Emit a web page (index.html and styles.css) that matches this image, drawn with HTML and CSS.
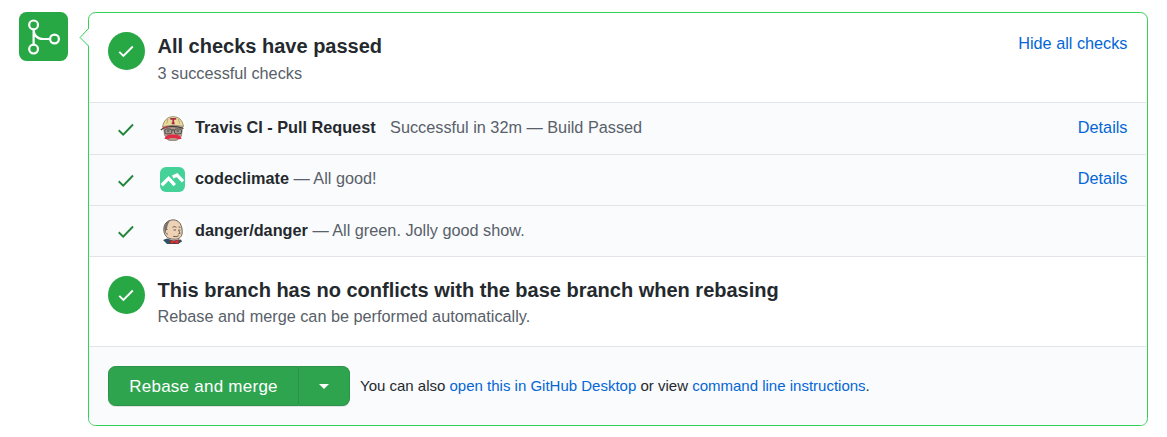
FILE: index.html
```html
<!DOCTYPE html>
<html lang="en">
<head>
<meta charset="utf-8">
<title>Merge pull request</title>
<link rel="stylesheet" href="styles.css">
</head>
<body>
<main class="timeline">
  <div class="merge-badge">
    <svg width="49" height="49" viewBox="0 0 49 49" fill="none" stroke="#fff" stroke-width="2.2"><circle cx="14.6" cy="12.9" r="4.4"/><circle cx="14.6" cy="37.1" r="4.4"/><circle cx="35.5" cy="27" r="4.4"/><path d="M14.6 17.2v15.6M14.6 17.4c0 5.8 3.8 9.6 9.4 9.6h7"/></svg>
  </div>
  <section class="box">
    <svg class="pointer" width="10" height="20" viewBox="0 0 10 20"><path d="M10 0L1 9.5 10 18.5" fill="#f6f8fa" stroke="#34d058" stroke-width="1"/></svg>
    <div class="panel">
      <div class="status checks">
        <span class="circle"><svg width="37" height="38" viewBox="0 0 37 38"><path d="M11.3 19.8l4.1 4.1 9.4-9.4"/></svg></span>
        <div class="copy"><h2>All checks have passed</h2><p>3 successful checks</p></div>
        <a class="toggle">Hide all checks</a>
      </div>
      <div class="row first">
        <svg class="tick" width="18" height="16" viewBox="0 0 18 16"><path d="M1.7 8.3l4.5 4.4L16 2.5"/></svg>
        <svg class="avatar" width="25" height="25" viewBox="0 0 25 25">
          <rect width="25" height="25" rx="7" fill="#fff"/>
          <path d="M3.5 11h19l-1 9-4 4-4.5 1-5-1-3.5-5z" fill="#b59a87" stroke="#7b7168" stroke-width=".7"/>
          <path d="M2.5 11C3.5 5 7 .7 13 .7S22.5 4 23.5 10.5C17 8.8 9 9 2.5 11z" fill="#ead99b" stroke="#847b5c" stroke-width=".8"/>
          <path d="M6.8 7.5l1-4.5M19.5 7.5L18.5 3" stroke="#b5a975"/>
          <path d="M10.2 2.9h6M13.2 3v4.500M11.7 7.3h3" stroke="#a92d44" stroke-width="1.7"/>
          <path d="M.8 14c5-4.3 15-4.8 22.7-1.5" fill="none" stroke="#45403f" stroke-width="1.3"/>
          <path d="M2.5 12.3l6-2" stroke="#c9374c" stroke-width="1.2"/>
          <rect x="4.8" y="13" width="7" height="4.8" rx="1.8" fill="#a79c91" stroke="#4a4c4b"/>
          <rect x="14.5" y="13" width="7" height="4.8" rx="1.8" fill="#a79c91" stroke="#4a4c4b"/>
          <path d="M7 15h2.5m7 0H19M12 14h2.5" stroke="#393f40" stroke-width="1"/>
          <path d="M4.5 22.8c.5-2.800 4-4.800 8.500-4.300 4.500-.5 8 1.500 8.700 4.300-2.500.7-4.700.3-6.200-.7h-5c-1.500 1-3.500 1.400-6 .7z" fill="#e22b45"/>
        </svg>
        <strong>Travis CI - Pull Request</strong><span class="result travis-result">Successful in 32m — Build Passed</span><a class="details">Details</a>
      </div>
      <div class="row">
        <svg class="tick" width="18" height="16" viewBox="0 0 18 16"><path d="M1.7 8.3l4.5 4.4L16 2.5"/></svg>
        <svg class="avatar" width="25" height="25" viewBox="0 0 25 25"><rect width="25" height="25" rx="6" fill="#45d298"/><path d="M1.7 18.2l6.9-6.8 6.2 6.7M12.7 10.1l4.3-2.1 6 6.3" fill="none" stroke="#fff" stroke-width="3.3"/></svg>
        <strong>codeclimate</strong><span class="result">— All good!</span><a class="details">Details</a>
      </div>
      <div class="row last">
        <svg class="tick" width="18" height="16" viewBox="0 0 18 16"><path d="M1.7 8.3l4.5 4.4L16 2.5"/></svg>
        <svg class="avatar" width="25" height="25" viewBox="0 0 25 25">
          <rect width="25" height="25" rx="7" fill="#fff"/>
          <path d="M3 21l4-1.5 6 2 8-1 1 2-4 2.5H7z" fill="#315063"/>
          <path d="M6 17C3 14 3 7 6 3.8S15-.3 18.5 2.7c3 2.3 4 7 3.7 12-1 4-4.2 6-8.2 5.5-4 0-6.5-1-8-3.2z" fill="#edd2b5" stroke="#4b443f" stroke-width=".8"/>
          <path d="M4 9C5 5 7 2 10.5 1.3 8.5 3.5 7.5 6 7 9.5L6.5 12 5 13z" fill="#77736c"/>
          <path d="M7.5 10.5c-3.5-1-2.5 5 .5 4.5" fill="#edd2b5" stroke="#4b443f" stroke-width=".8"/>
          <path d="M12.5 8.3q2-1.5 4 0M18.5 8l2 .2M13.5 11h2.5m2.5 0h2m-2 .3l1.7 3-2 .8m-5 2.2q3 1 5.5-.5" fill="none" stroke="#5e4f45" stroke-width=".9"/>
          <path d="M10.5 21l4 1.3 4.5-1.8-.5 4.3-4-1-4 1z" fill="#df3430" stroke="#7c2428" stroke-width=".4"/>
        </svg>
        <strong>danger/danger</strong><span class="result">— All green. Jolly good show.</span>
      </div>
      <div class="status conflict">
        <span class="circle"><svg width="37" height="38" viewBox="0 0 37 38"><path d="M11.3 19.8l4.1 4.1 9.4-9.4"/></svg></span>
        <div class="copy"><h2>This branch has no conflicts with the base branch when rebasing</h2><p>Rebase and merge can be performed automatically.</p></div>
      </div>
      <footer class="actions">
        <div class="button-group"><button class="merge">Rebase and merge</button><button class="dropdown" aria-label="Select merge method"><svg width="10" height="5" viewBox="0 0 10 5"><path d="M0 0h10L5 5z" fill="#fff"/></svg></button></div>
        <p>You can also <a>open this in GitHub Desktop</a> or view <a>command line instructions</a>.</p>
      </footer>
    </div>
  </section>
</main>
</body>
</html>
```
FILE: styles.css
```css
* { box-sizing: border-box; }
body { margin: 0; background: #fff; color: #24292e; font: 16.25px/24px "Liberation Sans", Arial, sans-serif; }
h2, p { margin: 0; }
a { color: #0366d6; text-decoration: none; }
svg { display: block; flex: none; }
.timeline { display: flex; gap: 20px; padding: 12px 19px; }
.merge-badge { width: 49px; height: 49px; flex: none; border-radius: 7.5px; background: #28a745; }
.box { position: relative; width: 1060px; height: 414px; border: 1px solid #34d058; border-radius: 7.5px; }
.pointer { position: absolute; left: -10px; top: 15px; }
.panel { height: 412px; padding-right: 1px; border-radius: 6.5px; overflow: hidden; display: flex; flex-direction: column; }
.status { display: flex; align-items: flex-start; padding: 19px 18.5px 0 19px; }
.checks { height: 89px; }
.checks p { padding-top: 1px; }
.conflict { height: 90px; border-top: 1px solid #e1e4e8; }
.circle { width: 37px; height: 38px; flex: none; border-radius: 50%; background: #28a745; }
.circle path { fill: none; stroke: #fff; stroke-width: 1.9; }
.copy { margin-left: 12.5px; }
h2 { font-size: 20px; line-height: 28px; }
.copy p { color: #586069; }
.toggle { margin: -1px 0 0 auto; }
.row { display: flex; align-items: flex-start; height: 51px; padding: 11px 18.5px 0 19px; border-top: 1px solid #e1e4e8; background: #fafbfc; }
.row.first { height: 52px; padding-top: 12px; }
.row.last { padding-top: 12px; }
.tick { margin: 7px 25px 0 9px; }
.last .tick { margin-top: 6px; }
.tick path { fill: none; stroke: #22863a; stroke-width: 1.9; }
.avatar { margin: 1px 10px 0 0; }
.result { margin-left: 4.5px; color: #586069; }
.travis-result { margin-left: 14.5px; }
.details { margin-left: auto; }
.actions { display: flex; align-items: center; gap: 10px; height: 79px; padding: 0 19px; border-top: 1px solid #e1e4e8; background: #fafbfc; font-size: 15px; }
.button-group { display: flex; height: 40px; }
button { margin: 0; padding: 0; border: 1px solid #2b9247; background: #2ea44f; color: #fff; font: 17px/24px "Liberation Sans", Arial, sans-serif; letter-spacing: .25px; box-shadow: 0 1px 0 rgba(27,31,35,.1); }
.merge { width: 191px; padding-top: 2px; border-radius: 7.5px 0 0 7.5px; }
.dropdown { width: 51px; border-left: 0; border-radius: 0 7.5px 7.5px 0; display: flex; align-items: center; justify-content: center; }
```
